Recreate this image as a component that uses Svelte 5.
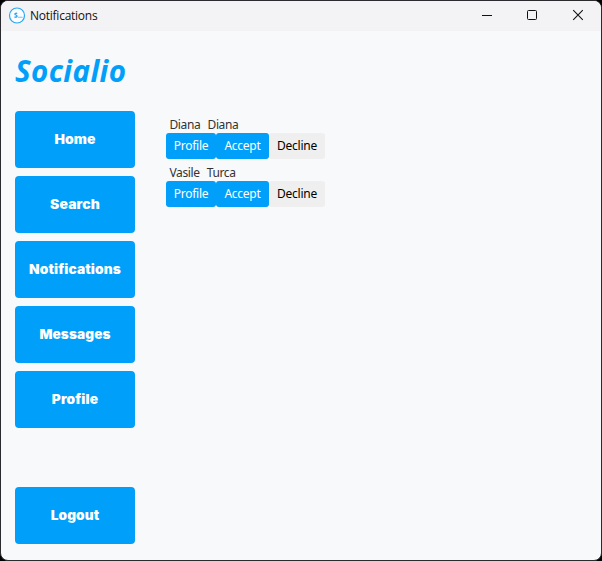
<script>
  const links = [
    { label: 'Home', stretch: 1.07 },
    { label: 'Search', stretch: 1.07 },
    { label: 'Notifications', stretch: 1.055 },
    { label: 'Messages', stretch: 1.045 },
    { label: 'Profile', stretch: 1.055 }
  ];
  const requests = [
    { first: 'Diana', last: 'Diana' },
    { first: 'Vasile', last: 'Turca' }
  ];
</script>

<div class="desktop">
  <div class="window">
    <header>
      <svg class="logo" width="18" height="18" viewBox="0 0 18 18">
        <circle cx="9" cy="8.5" r="7.5" fill="#fcfdff" stroke="#27a7f5" stroke-width="1.2" />
        <path d="M9.2 6.6C8.3 5.9 6.8 6.2 6.9 7.2C7 8.2 9.2 7.9 9.1 9.1C9 10.2 7.4 10.4 6.5 9.7" fill="none" stroke="#159ff5" stroke-width="1.2" />
        <path d="M10 10.3h4.6" stroke="#6fc4f7" stroke-width="1.1" />
      </svg>
      <span class="title">Notifications</span>
      <div class="controls">
        <svg width="46" height="30" viewBox="0 0 46 30"><path d="M18 14.5h10" stroke="#111" /></svg>
        <svg width="46" height="30" viewBox="0 0 46 30"><rect x="17.5" y="9.5" width="9" height="9" rx="1" fill="none" stroke="#111" /></svg>
        <svg width="46" height="30" viewBox="0 0 46 30"><path d="M17.2 9.2l9.6 9.6M26.8 9.2l-9.6 9.6" stroke="#111" stroke-width="1.1" /></svg>
      </div>
    </header>
    <main>
      <nav>
        <h1>Socialio</h1>
        {#each links as link}
          <button><span style="transform:scaleX({link.stretch})">{link.label}</span></button>
        {/each}
        <button class="logout"><span style="transform:scaleX(1.05)">Logout</span></button>
      </nav>
      <section>
        {#each requests as r}
          <article>
            <div class="name"><span>{r.first}</span><span>{r.last}</span></div>
            <div class="actions">
              <button class="profile">Profile</button><button class="accept">Accept</button><button class="decline">Decline</button>
            </div>
          </article>
        {/each}
      </section>
    </main>
  </div>
</div>

<style>
  .desktop { width: 602px; height: 561px; background: #000; overflow: hidden; }
  .window { box-sizing: border-box; width: 602px; height: 561px; border: 1px solid #2b2a2e; border-radius: 8px; background: #f7f9fb; overflow: hidden; }
  header { height: 30px; display: flex; align-items: center; background: #f3f3f5; padding-left: 7px; }
  .title { font: 12px/16px "Open Sans", sans-serif; color: #111; margin-left: 4px; letter-spacing: -0.25px; }
  .controls { display: flex; margin: 0 -1px 0 auto; }
  main { display: flex; height: 529px; }
  nav { width: 120px; margin-left: 14px; display: flex; flex-direction: column; }
  h1 { margin: 19px 0 17px; height: 43px; white-space: nowrap; font: italic 700 29.5px/41px "Open Sans", sans-serif; letter-spacing: 0.4px; color: #009ff9; }
  button { border: 0; padding: 0; margin: 0; }
  nav button { height: 57px; flex: none; margin-bottom: 8px; border-radius: 4px; background: #009ff9; color: #fff; font: 900 13px/18px Inter, sans-serif; letter-spacing: 0.1px; }
  nav button span { display: block; margin-top: -1px; }
  nav button:first-of-type { margin-top: 1px; }
  nav .logout { margin-top: 51px; }
  section { margin: 86px 0 0 31px; }
  article { height: 48px; }
  .name { display: flex; gap: 7.3px; padding-left: 3.5px; height: 16px; font: 12px/16px "Noto Sans", sans-serif; letter-spacing: -0.4px; color: #333; }
  .actions { display: flex; }
  .actions button { height: 26px; border-radius: 3px; background: #009ff9; color: #fff; font: 12px/26px "Noto Sans", sans-serif; letter-spacing: -0.25px; }
  .actions .profile { width: 50px; }
  .actions .accept { width: 53px; }
  .actions .decline { width: 56px; background: #efefef; color: #000; }
</style>
